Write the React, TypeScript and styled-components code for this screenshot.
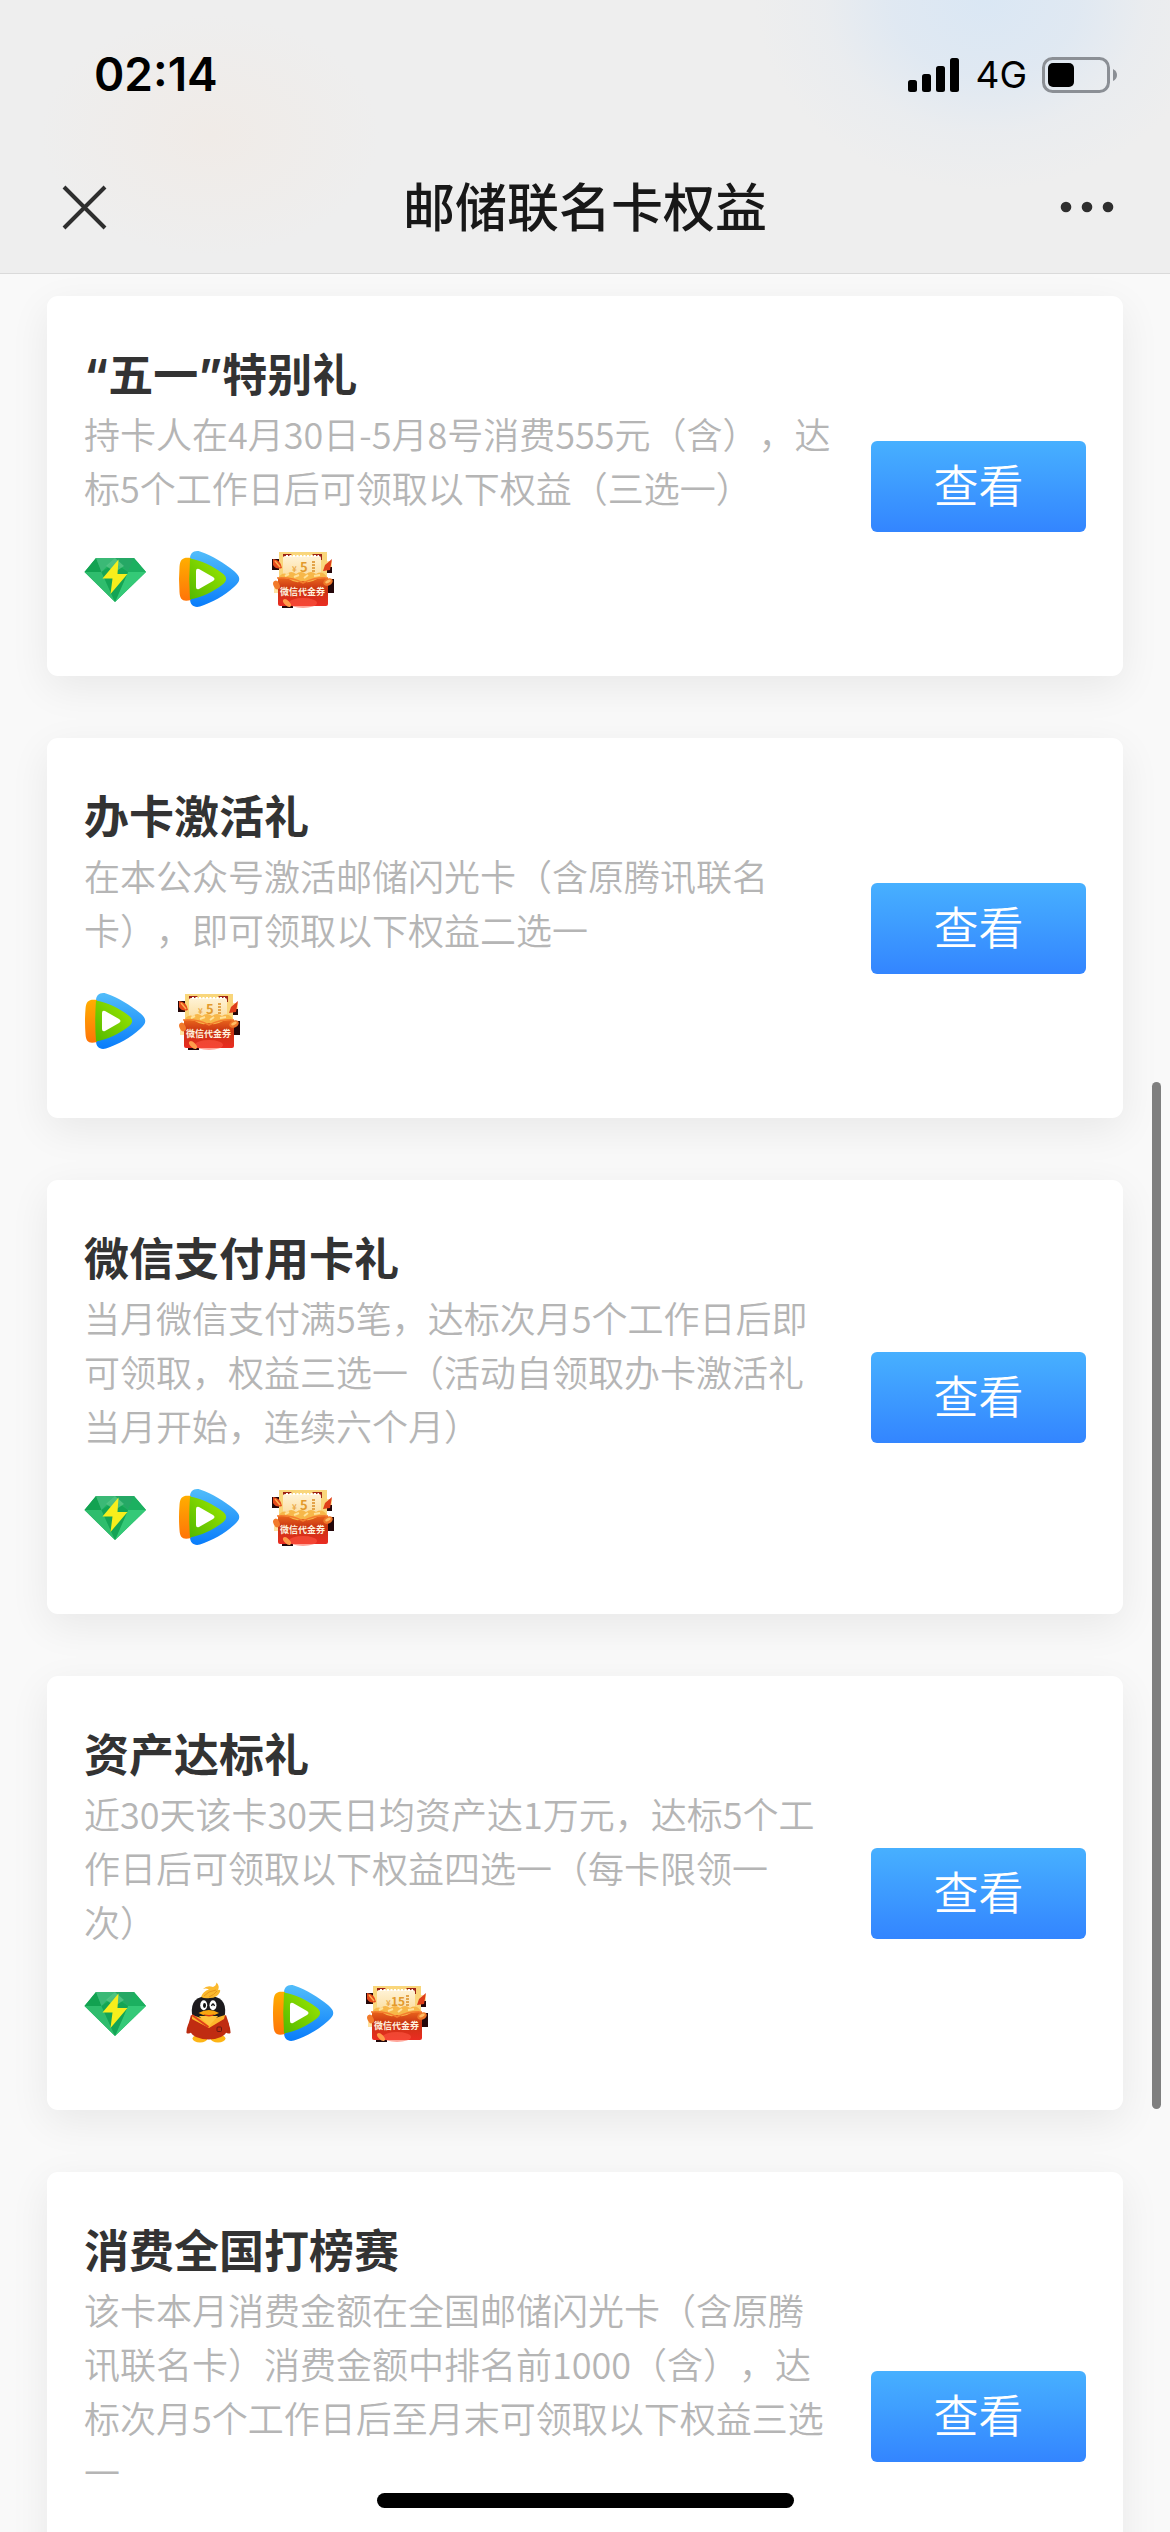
import React from "react";
import styled, { createGlobalStyle } from "styled-components";

const GlobalStyle = createGlobalStyle`
  * { box-sizing: border-box; }
  body {
    margin: 0;
    background: #f9f9f9;
    font-family: Inter, "Noto Sans CJK SC", sans-serif;
    text-spacing-trim: space-all;
  }
`;

const Screen = styled.div`
  position: relative;
  display: flex;
  flex-direction: column;
  height: 100vh;
  overflow: hidden;
`;

const Header = styled.header`
  flex: none;
  padding-bottom: 9px;
  border-bottom: 1px solid #dadada;
  background:
    radial-gradient(ellipse 230px 190px at 985px 0, #dae7f4 0%, rgba(220, 231, 243, 0.8) 40%, rgba(228, 234, 241, 0.4) 70%, rgba(238, 238, 238, 0) 100%),
    radial-gradient(ellipse 170px 120px at 210px 135px, #f0ebe7 0%, rgba(238, 238, 238, 0) 100%),
    #eeeeee;
`;

const StatusBar = styled.div`
  display: flex;
  align-items: center;
  justify-content: space-between;
  height: 150px;
  padding: 0 52px 0 94px;
  color: #000;
`;

const Clock = styled.time`
  padding-bottom: 2px;
  font-size: 46px;
  font-weight: 600;
  line-height: 56px;
`;

const StatusIcons = styled.div`
  display: flex;
  align-items: center;
  gap: 15px;
`;

const Network = styled.span`
  font-size: 37px;
  font-weight: 400;
  line-height: 44px;
`;

const NavBar = styled.nav`
  display: grid;
  grid-template-columns: 1fr auto 1fr;
  align-items: center;
  height: 114px;
  padding: 0 48px;
`;

const PageTitle = styled.h1`
  margin: 0;
  padding-bottom: 4px;
  font-family: "Noto Sans CJK SC", sans-serif;
  font-size: 52px;
  font-weight: 500;
  line-height: 72px;
  color: #181818;
`;

const IconButton = styled.button<{ $end?: boolean }>`
  display: flex;
  justify-self: ${(p) => (p.$end ? "end" : "start")};
  padding: ${(p) => (p.$end ? "8px" : "8px 14px")};
  border: 0;
  background: none;
  color: #2e2e2e;
`;

const CardList = styled.main`
  display: flex;
  flex: 1;
  flex-direction: column;
  gap: 62px;
  min-height: 0;
  padding: 22px 47px 0;
  overflow: hidden;
`;

const Card = styled.article`
  display: flex;
  flex: none;
  align-items: center;
  gap: 36px;
  padding: 49px 37px 66px;
  border-radius: 11px;
  background: #fff;
  box-shadow: 0 12px 40px rgba(0, 0, 0, 0.07);
`;

const CardBody = styled.div`
  flex: 1;
  min-width: 0;
`;

const CardTitle = styled.h2`
  margin: 0;
  font-family: Inter, "Noto Sans CJK SC", sans-serif;
  font-size: 45px;
  font-weight: 700;
  line-height: 61px;
  color: #333;
`;

const Description = styled.p`
  margin: 0 0 33px;
  font-family: "Noto Sans CJK SC", sans-serif;
  font-size: 36px;
  font-weight: 350;
  line-height: 54px;
  color: #b5b5b5;
`;

const Rewards = styled.div`
  display: flex;
  gap: 31px;
`;

const RewardIcon = styled.svg`
  display: block;
  width: 63px;
  height: 63px;
  overflow: visible;
`;

const ViewButton = styled.button`
  flex: none;
  width: 215px;
  height: 91px;
  margin-top: 17px;
  padding: 0 0 5px;
  border: 0;
  border-radius: 6px;
  background: linear-gradient(#47b0ff, #3385ff);
  color: #fff;
  font-family: "Noto Sans CJK SC", sans-serif;
  font-size: 45px;
  font-weight: 350;
  line-height: 65px;
`;

const ScrollThumb = styled.div`
  position: absolute;
  top: 1082px;
  right: 9px;
  width: 9px;
  height: 1027px;
  border-radius: 5px;
  background: #7f7f7f;
`;

const HomeIndicator = styled.div`
  position: absolute;
  bottom: 24px;
  left: 50%;
  width: 417px;
  height: 15px;
  margin-left: -208px;
  border-radius: 8px;
  background: #000;
`;

function Gem() {
  return (
    <RewardIcon viewBox="0 0 63 63" role="img" aria-label="绿钻">
      <path d="M12 11H50L62 25L31 55L.5 25Z" fill="#20b35f" />
      <path d="M.5 25H17.5L31 55Z" fill="#2fbd6d" />
      <path d="M62 25H44L31 55Z" fill="#34c977" />
      <path d="M17.5 25L31 55L44 25L31 16Z" fill="#14a455" />
      <path d="M12 11L.5 25H17.5Z" fill="#12a251" />
      <path d="M12 11H31L17.5 25Z" fill="#3bb976" />
      <path d="M31 11H50L44 25Z" fill="#25a865" />
      <path d="M50 11L62 25H44Z" fill="#1cb060" />
      <path d="M22 19L31 11L40 19L31 25Z" fill="#63c98f" opacity=".7" />
      <path d="M34.5 12.5L18.5 31.5H28.5L26.5 47L43.5 27H33.5Z" fill="#f7ee1c" />
    </RewardIcon>
  );
}

function Play() {
  const id = React.useId();
  return (
    <RewardIcon viewBox="0 0 63 63" role="img" aria-label="视频会员">
      <defs>
        <linearGradient id={id + "b"} x1="0" y1="0" x2="0" y2="1">
          <stop offset="0" stopColor="#52bdfa" />
          <stop offset="1" stopColor="#087cfb" />
        </linearGradient>
        <linearGradient id={id + "o"} x1="0" y1="0" x2="0" y2="1">
          <stop offset="0" stopColor="#ffae00" />
          <stop offset="1" stopColor="#ff7408" />
        </linearGradient>
        <linearGradient id={id + "g"} x1="1" y1="0" x2="0" y2="1">
          <stop offset="0" stopColor="#a0ea00" />
          <stop offset="1" stopColor="#52b800" />
        </linearGradient>
      </defs>
      <path d="M12 12C12 6 16 3 22 4.500C35 9 46 16 56 24C63 30 63 34 56 40C46 49 35 55 22 59.500C16 61 12 58 12 52Z" fill={`url(#${id}b)`} />
      <path d="M13 11C5 10 2 12 1.500 20Q.5 32 1.500 45C2 53 5 55 13 53Z" fill={`url(#${id}o)`} />
      <path d="M12 11.500C24 14 35 19 44 26C49.500 30 49.500 34 44 38C35 45 24 50 12 52.500Q10.500 32 12 11.500Z" fill={`url(#${id}g)`} />
      <path d="M18 24Q18 21 21 22L35 30Q38 32 35 34L21 42Q18 43 18 40Z" fill="#fff" />
    </RewardIcon>
  );
}

function Penguin() {
  return (
    <RewardIcon viewBox="0 0 63 63" role="img" aria-label="超级会员">
      <ellipse cx="22" cy="57.500" rx="7.500" ry="4" fill="#fdb515" />
      <ellipse cx="40" cy="57.500" rx="7.500" ry="4" fill="#fdb515" />
      <path d="M15 37Q8 44 8.500 52Q12 54 16 48Z" fill="#b92b10" />
      <path d="M46 37Q53 44 52.500 52Q49 54 45 48Z" fill="#b92b10" />
      <path d="M14 33Q12 15 30.500 15Q49 15 47 33L45 41H16Z" fill="#1c1a1d" />
      <path d="M13 34Q30 45 48 34L51 43Q51 52 43 56Q31 61 18 56Q10 52 10.500 43Z" fill="#c02c11" />
      <path d="M14 34Q30 41 47 34L46 38L31 47L14 38Z" fill="#fdb52b" />
      <path d="M21 35L31 45L40 35Z" fill="#ffc43c" />
      <path d="M14 34L30.500 46" stroke="#df3f18" strokeWidth="2" />
      <ellipse cx="25.700" cy="24.300" rx="3.500" ry="5" fill="#fff" />
      <ellipse cx="35" cy="24.300" rx="3.500" ry="5" fill="#fff" />
      <ellipse cx="26.500" cy="24.500" rx="1.500" ry="2.400" fill="#111" />
      <path d="M33.500 25Q35 21 36.500 25" fill="none" stroke="#111" strokeWidth="1.300" />
      <path d="M20.500 32Q31 26 41 32Q31 38 20.500 32Z" fill="#f9a60f" />
      <path d="M25 33Q31 35 37 33Q31 38 25 33Z" fill="#d53a12" />
      <rect x="39" y="46" width="4.500" height="4.500" rx="1" fill="none" stroke="#651a12" />
      <path d="M23 16Q25 10 31 8.500Q28 7 25 8Q29 4 35 6Q38 5 38.500 1.500Q42 5 40 9Q43 8 42 11Q39 17 32 17Q27 18 23 16Z" fill="#fbb92d" />
      <path d="M26 15Q30 10 38 9M31 16Q36 14 39 10" stroke="#e8971c" fill="none" />
    </RewardIcon>
  );
}

const TicketText = styled.text`
  font-family: "Noto Sans CJK SC", sans-serif;
  font-weight: 700;
`;

function Voucher({ amount = "5" }: { amount?: string }) {
  const id = React.useId();
  const wide = amount.length > 1;
  return (
    <RewardIcon viewBox="0 0 63 63" role="img" aria-label={`微信代金券${amount}元`}>
      <defs>
        <linearGradient id={id + "r"} x1="0" y1="0" x2="0" y2="1">
          <stop offset="0" stopColor="#e8641c" />
          <stop offset=".4" stopColor="#c93412" />
          <stop offset="1" stopColor="#ea2c22" />
        </linearGradient>
        <linearGradient id={id + "t"} x1="0" y1="0" x2="0" y2="1">
          <stop offset="0" stopColor="#fff3d6" />
          <stop offset="1" stopColor="#fbdc9c" />
        </linearGradient>
      </defs>
      <path d="M0 12H8V23H0ZM53 32H62V46H53ZM10 54H21V61H10ZM52 18H60V26H52Z" fill="#24070a" />
      <path d="M2 34H10V46H2ZM52 14H60V20H52Z" fill="#ffe3a1" />
      <path d="M7 5H55V30H7Z" fill="#f9d67b" />
      <path d="M11 7H20L16 10H11ZM40 7H50V13H46Z" fill="#9d2316" />
      <rect x="11" y="9" width="38" height="22" rx="2" fill={`url(#${id}t)`} />
      <path d="M14 9H47" stroke="#fff" strokeWidth="2" strokeDasharray="2 1.500" />
      <path d="M6 31H56V57Q56 59 54 59H8Q6 59 6 57Z" fill={`url(#${id}r)`} />
      <ellipse cx="31" cy="56" rx="14" ry="5" fill="#ff5b45" opacity=".55" />
      <path d="M7 30Q10 25 15 27Q19 23 24 27Q29 23 34 27Q39 23 44 27Q50 23 55 30L45 32Q37 37 31 34Q24 37 17 32Z" fill="#f7b749" />
      <path d="M13 29L17 27M22 30L27 28M32 31L36 28M42 29L48 28" stroke="#ffe29a" strokeWidth="2" />
      <path d="M5 31Q20 30 31 36Q43 30 56 31" stroke="#f47c2e" strokeWidth="1.500" fill="none" />
      <path d="M1 12Q9 13 10 21Q4 23 1 18Z" fill="#e54a1b" />
      <path d="M3 14L8 20" stroke="#ffb052" strokeWidth="1.500" />
      <path d="M53 18L60 12L58 23L51 24Z" fill="#df3e19" />
      <ellipse cx="56" cy="35" rx="5" ry="3.500" transform="rotate(-25 56 35)" fill="#ee7628" />
      <ellipse cx="56" cy="34.500" rx="3" ry="1.500" transform="rotate(-25 56 34.500)" fill="#ffbd64" />
      <ellipse cx="4.500" cy="38" rx="3" ry="4.500" transform="rotate(-25 4.500 38)" fill="#f27a2b" />
      <ellipse cx="15" cy="56" rx="5" ry="2.500" transform="rotate(45 15 56)" fill="#ff9c4a" />
      <TicketText x={wide ? 25 : 28} y="25" fontSize={wide ? 12 : 13} fill="#e39a2c">{amount}</TicketText>
      <TicketText x="20" y="25" fontSize="8" fill="#eba947">¥</TicketText>
      <path d="M41.500 14V26" stroke="#e3a44b" strokeWidth="3" strokeDasharray="2 1" />
      <TicketText x="30.500" y="48" fontSize="9" textAnchor="middle" fill="#fff2de">微信代金券</TicketText>
    </RewardIcon>
  );
}

type Reward = "gem" | "penguin" | "play" | "voucher" | "voucher15";

const rewardIcons: Record<Reward, React.ReactNode> = {
  gem: <Gem />,
  penguin: <Penguin />,
  play: <Play />,
  voucher: <Voucher />,
  voucher15: <Voucher amount="15" />,
};

const benefits: { title: string; text: string; rewards: Reward[] }[] = [
  {
    title: "“五一”特别礼",
    text: "持卡人在4月30日-5月8号消费555元（含），达标5个工作日后可领取以下权益（三选一）",
    rewards: ["gem", "play", "voucher"],
  },
  {
    title: "办卡激活礼",
    text: "在本公众号激活邮储闪光卡（含原腾讯联名卡），即可领取以下权益二选一",
    rewards: ["play", "voucher"],
  },
  {
    title: "微信支付用卡礼",
    text: "当月微信支付满5笔，达标次月5个工作日后即可领取，权益三选一（活动自领取办卡激活礼当月开始，连续六个月）",
    rewards: ["gem", "play", "voucher"],
  },
  {
    title: "资产达标礼",
    text: "近30天该卡30天日均资产达1万元，达标5个工作日后可领取以下权益四选一（每卡限领一次）",
    rewards: ["gem", "penguin", "play", "voucher15"],
  },
  {
    title: "消费全国打榜赛",
    text: "该卡本月消费金额在全国邮储闪光卡（含原腾讯联名卡）消费金额中排名前1000（含），达标次月5个工作日后至月末可领取以下权益三选一",
    rewards: ["gem", "penguin", "play"],
  },
];

export default function App() {
  return (
    <Screen>
      <GlobalStyle />
      <Header>
        <StatusBar>
          <Clock>02:14</Clock>
          <StatusIcons>
            <svg width="52" height="36" viewBox="0 0 52 36" aria-hidden="true">
              <rect x="0" y="23" width="9" height="12" rx="2.500" />
              <rect x="14" y="17" width="9" height="18" rx="2.500" />
              <rect x="28" y="9" width="9" height="26" rx="2.500" />
              <rect x="42" y="1" width="9" height="34" rx="2.500" />
            </svg>
            <Network>4G</Network>
            <svg width="76" height="36" viewBox="0 0 76 36" aria-hidden="true">
              <rect x="1.500" y="1.500" width="65" height="33" rx="9" fill="none" stroke="#8b8f95" strokeWidth="3" />
              <rect x="6" y="6" width="26" height="24" rx="5" />
              <path d="M71 12Q75 14 75 18T71 24Z" fill="#8b8f95" />
            </svg>
          </StatusIcons>
        </StatusBar>
        <NavBar>
          <IconButton aria-label="关闭">
            <svg width="45" height="45" viewBox="0 0 45 45" fill="none" stroke="currentColor" strokeWidth="4">
              <path d="M2 2L43 43M43 2L2 43" />
            </svg>
          </IconButton>
          <PageTitle>邮储联名卡权益</PageTitle>
          <IconButton $end aria-label="更多">
            <svg width="54" height="12" viewBox="0 0 54 12" fill="currentColor">
              <circle cx="6" cy="6" r="5.300" />
              <circle cx="27" cy="6" r="5.300" />
              <circle cx="48" cy="6" r="5.300" />
            </svg>
          </IconButton>
        </NavBar>
      </Header>
      <CardList>
        {benefits.map((b) => (
          <Card key={b.title}>
            <CardBody>
              <CardTitle>{b.title}</CardTitle>
              <Description>{b.text}</Description>
              <Rewards>
                {b.rewards.map((r) => (
                  <React.Fragment key={r}>{rewardIcons[r]}</React.Fragment>
                ))}
              </Rewards>
            </CardBody>
            <ViewButton>查看</ViewButton>
          </Card>
        ))}
      </CardList>
      <ScrollThumb />
      <HomeIndicator />
    </Screen>
  );
}
